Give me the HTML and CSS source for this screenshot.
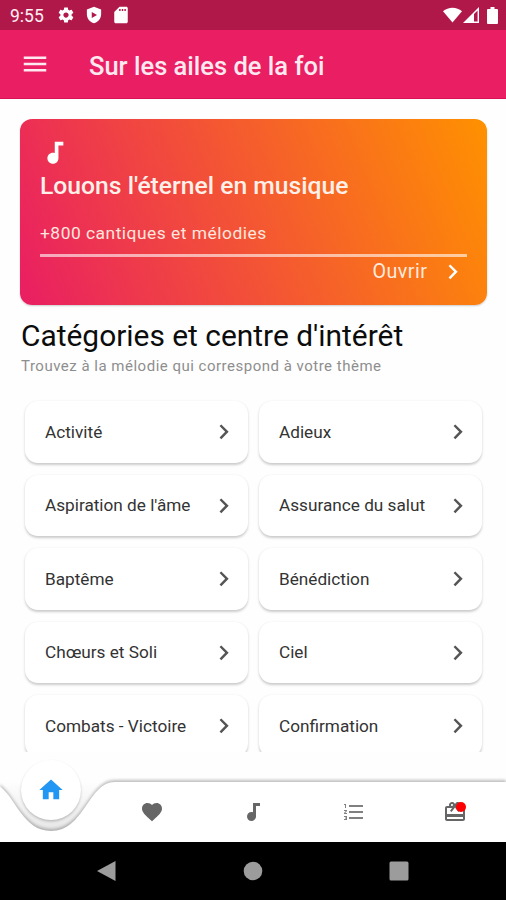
FILE: index.html
```html
<!DOCTYPE html>
<html lang="fr">
<head>
  <meta charset="UTF-8">
  <title>Sur les ailes de la foi</title>
  <meta name="viewport" content="width=device-width,initial-scale=1">
  <link rel="stylesheet" href="styles.css">
</head>
<body>
  <svg class="defs">
    <symbol id="chevron" viewBox="0 0 24 24"><path d="M10 6L8.59 7.41 13.17 12l-4.58 4.59L10 18l6-6z"/></symbol>
    <symbol id="note" viewBox="0 0 24 24"><path d="M12 3v9.28c-.47-.17-.97-.28-1.5-.28C8.01 12 6 14.01 6 16.5S8.01 21 10.5 21c2.31 0 4.2-1.75 4.45-4H15V6h4V3h-7z"/></symbol>
  </svg>
  <div class="screen">
    <div class="statusbar">
      <span class="clock">9:55</span>
      <svg class="st-icon" viewBox="0 0 24 24"><path d="M19.43 12.98c.04-.32.07-.64.07-.98s-.03-.66-.07-.98l2.11-1.65c.19-.15.24-.42.12-.64l-2-3.46c-.12-.22-.39-.3-.61-.22l-2.49 1c-.52-.4-1.08-.73-1.69-.98l-.38-2.65C14.46 2.18 14.25 2 14 2h-4c-.25 0-.46.18-.49.42l-.38 2.65c-.61.25-1.17.59-1.69.98l-2.49-1c-.23-.09-.49 0-.61.22l-2 3.46c-.13.22-.07.49.12.64l2.11 1.65c-.04.32-.07.65-.07.98s.03.66.07.98l-2.11 1.65c-.19.15-.24.42-.12.64l2 3.46c.12.22.39.3.61.22l2.49-1c.52.4 1.08.73 1.69.98l.38 2.65c.03.24.24.42.49.42h4c.25 0 .46-.18.49-.42l.38-2.65c.61-.25 1.17-.59 1.69-.98l2.49 1c.23.09.49 0 .61-.22l2-3.46c.12-.22.07-.49-.12-.64l-2.11-1.65zM12 15.5c-1.93 0-3.5-1.57-3.5-3.5s1.57-3.5 3.5-3.5 3.5 1.57 3.5 3.5-1.57 3.5-3.5 3.5z"/></svg>
      <svg class="st-icon" viewBox="0 0 24 24"><path fill-rule="evenodd" d="M12 1L2.500 4.500V11c0 5.600 4 10.700 9.500 12 5.500-1.300 9.500-6.400 9.500-12V4.500zM9 8l7 4-7 4z"/></svg>
      <svg class="st-icon" viewBox="0 0 24 24"><path d="M19 1h-9L3 8v13c0 1.100.9 2 2 2h14c1.100 0 2-.9 2-2V3c0-1.100-.9-2-2-2zM11.500 6.500h-2V4h2zm3.500 0h-2V4h2zm3.500 0h-2V4h2z"/></svg>
      <span class="spacer"></span>
      <svg class="wifi" viewBox="0 0 20 16"><path d="M10 16L0 4C5.500-1 14.500-1 20 4z"/></svg>
      <svg class="signal" viewBox="0 0 16 16"><path fill-rule="evenodd" d="M16 0v16H0zM14.600 3.500L11 7v7.600h3.600z"/></svg>
      <svg class="battery" viewBox="0 0 11 17"><path d="M3.500 0h4v2H10q1 0 1 1v13q0 1-1 1H1q-1 0-1-1V3q0-1 1-1h2.500z"/></svg>
    </div>

    <header class="appbar">
      <svg class="menu" viewBox="0 0 24 24"><path d="M3 18h18v-2H3v2zm0-5h18v-2H3v2zm0-7v2h18V6H3z"/></svg>
      <h1>Sur les ailes de la foi</h1>
    </header>

    <main>
      <section class="banner">
        <svg class="icon"><use href="#note"/></svg>
        <h2>Louons l'éternel en musique</h2>
        <p>+800 cantiques et mélodies</p>
        <div class="open">
          <span>Ouvrir</span>
          <svg class="icon"><use href="#chevron"/></svg>
        </div>
      </section>

      <h3>Catégories et centre d'intérêt</h3>
      <p class="hint">Trouvez à la mélodie qui correspond à votre thème</p>

      <div class="list">
        <div class="card"><span>Activité</span><svg class="icon"><use href="#chevron"/></svg></div>
        <div class="card"><span>Adieux</span><svg class="icon"><use href="#chevron"/></svg></div>
        <div class="card"><span>Aspiration de l'âme</span><svg class="icon"><use href="#chevron"/></svg></div>
        <div class="card"><span>Assurance du salut</span><svg class="icon"><use href="#chevron"/></svg></div>
        <div class="card"><span>Baptême</span><svg class="icon"><use href="#chevron"/></svg></div>
        <div class="card"><span>Bénédiction</span><svg class="icon"><use href="#chevron"/></svg></div>
        <div class="card"><span>Chœurs et Soli</span><svg class="icon"><use href="#chevron"/></svg></div>
        <div class="card"><span>Ciel</span><svg class="icon"><use href="#chevron"/></svg></div>
        <div class="card"><span>Combats - Victoire</span><svg class="icon"><use href="#chevron"/></svg></div>
        <div class="card"><span>Confirmation</span><svg class="icon"><use href="#chevron"/></svg></div>
      </div>
    </main>

    <nav class="tabs">
      <svg class="curve" viewBox="0 0 506 90"><path d="M-13 30C14 30 17 79 51 79S88 30 115 30H506V90H-13z"/></svg>
      <a class="tab active"><span class="bubble"><svg viewBox="0 0 24 24"><path d="M10 20v-6h4v6h5v-8h3L12 3 2 12h3v8z"/></svg></span></a>
      <a class="tab"><svg viewBox="0 0 24 24"><path d="M12 21.350l-1.450-1.320C5.400 15.360 2 12.280 2 8.500 2 5.420 4.420 3 7.500 3c1.740 0 3.410.81 4.500 2.090C13.090 3.810 14.760 3 16.500 3 19.580 3 22 5.420 22 8.500c0 3.780-3.400 6.860-8.550 11.540L12 21.350z"/></svg></a>
      <a class="tab"><svg><use href="#note"/></svg></a>
      <a class="tab"><svg class="thin" viewBox="0 0 24 24"><path d="M2 17h2v.5H3v1h1v.5H2v1h3v-4H2v1zm1-9h1V4H2v1h1v3zm-1 3h1.800L2 13.100v.9h3v-1H3.200L5 10.900V10H2v1zm5-6v2h14V5H7zm0 14h14v-2H7v2zm0-6h14v-2H7v2z"/></svg></a>
      <a class="tab"><svg class="gift" viewBox="0 0 24 24"><path fill-rule="evenodd" d="M20 6h-2.180c.11-.31.18-.65.18-1 0-1.660-1.340-3-3-3-1.050 0-1.960.54-2.500 1.350l-.5.670-.5-.680C10.960 2.540 10.050 2 9 2 7.340 2 6 3.340 6 5c0 .35.070.69.180 1H4c-1.110 0-1.990.89-1.990 2L2 19c0 1.110.89 2 2 2h16c1.110 0 2-.89 2-2V8c0-1.110-.89-2-2-2zM9 4c.55 0 1 .45 1 1s-.45 1-1 1-1-.45-1-1 .45-1 1-1zM20 19H4v-2h16v2zm0-5H4V8h5.080L7 10.830 8.620 12 12 7.400l3.380 4.600L17 10.830 14.920 8H20v6z"/></svg><i class="dot"></i></a>
    </nav>

    <footer class="sysnav">
      <svg viewBox="0 0 20 20"><path d="M18.500 0v20L0 10z"/></svg>
      <svg viewBox="0 0 20 20"><circle cx="10" cy="10" r="9.300"/></svg>
      <svg viewBox="0 0 20 20"><rect x=".5" y=".5" width="19" height="19" rx="1.500"/></svg>
    </footer>
  </div>
</body>
</html>
```
FILE: styles.css
```css
* { box-sizing: border-box; }
body { font-family: Roboto, sans-serif; background: #fefefe; margin: 0; }
h1, h2, h3, p { margin: 0; white-space: nowrap; }
svg { fill: currentColor; flex-shrink: 0; }
.defs { display: none; }
.icon { width: 29.5px; height: 29.5px; display: block; }
.screen { width: 506px; height: 900px; display: flex; flex-direction: column; overflow: hidden; }

.statusbar { height: 30px; background: #b0184a; color: #fff; display: flex; align-items: center; padding: 0 8px 0 10px; }
.clock { width: 47px; font-size: 17.5px; line-height: 30px; padding-top: 1px; color: #fff0f4; }
.st-icon { width: 18px; height: 18px; margin-right: 9.5px; }
.spacer { flex: 1; }
.wifi { width: 19px; height: 16px; }
.signal { width: 16px; height: 16px; margin: 0 8px 0 1px; }
.battery { width: 11px; height: 17px; }

.appbar { height: 69px; background: #e91e63; border-bottom: 1px solid #d81255; color: #ffe9f0; display: flex; align-items: center; padding-left: 20px; }
.menu { width: 30px; height: 30px; margin-right: 39px; }
h1 { font-size: 25.5px; font-weight: 500; line-height: 30px; padding-top: 3px; }

main { height: 653px; padding: 20px 19px 0 20px; display: flex; flex-direction: column; overflow: hidden; }
.banner { height: 186px; flex-shrink: 0; border-radius: 12px; padding: 19px 20px 0; color: #fff; background: linear-gradient(68deg, #e91e63, #ff9100); box-shadow: 0 1px 2px rgba(0,0,0,0.2); }
h2 { font-size: 24.7px; font-weight: 500; line-height: 30px; margin-top: 3px; color: #fff0ea; }
.banner p { font-size: 17.4px; line-height: 24px; letter-spacing: 0.5px; margin-top: 20px; color: #ffe6de; }
.open { display: flex; justify-content: flex-end; align-items: center; border-top: 3px solid rgba(255,255,255,0.6); margin-top: 9px; color: #ffeade; font-size: 19.7px; letter-spacing: 0.5px; }
.open .icon { margin-left: 10px; color: #fff; }

h3 { font-size: 29.9px; font-weight: 400; line-height: 34px; margin: 14px 0 0 1px; color: #0c0c0c; }
.hint { font-size: 15px; line-height: 20px; letter-spacing: 0.5px; margin: 3px 0 0 1px; color: #8e8e8e; }

.list { flex: 1; display: grid; grid-template-columns: 223px 223px; grid-auto-rows: 61.5px; gap: 12px 11px; padding: 5px 5px 0; margin-top: 20px; overflow: hidden; }
.card { display: flex; align-items: center; justify-content: space-between; padding: 0 10px 0 20px; background: #fff; border-radius: 13px; box-shadow: 0 1.5px 2.5px rgba(0,0,0,0.2); font-size: 17.2px; color: #333; white-space: nowrap; }
.card .icon { color: #555; }

.tabs { position: relative; height: 89px; flex-shrink: 0; display: flex; background: linear-gradient(#fefefe 34%, #e8e8e8 85%); color: #666; }
.curve { position: absolute; left: 0; top: 0; width: 506px; height: 90px; fill: #fff; filter: drop-shadow(0 -1.5px 1.5px rgba(0,0,0,0.25)); }
.tab { position: relative; width: 101px; display: flex; justify-content: center; padding-top: 47.5px; }
.tab svg { width: 24px; height: 24px; }
.tab .thin { color: #808080; }
.tab .gift { margin-left: 1px; }
.tab.active { padding-top: 8px; }
.bubble { width: 60px; height: 60px; border-radius: 50%; background: #fff; color: #2196f3; display: flex; align-items: center; justify-content: center; box-shadow: 0 1.5px 2.5px rgba(0,0,0,0.22); }
.bubble svg { width: 28px; height: 28px; }
.dot { position: absolute; left: 51.5px; top: 49.5px; width: 10px; height: 10px; border-radius: 50%; background: #f00; }

.sysnav { height: 59px; flex-shrink: 0; background: #000; border-top: 1px solid #777; color: #9c9c9c; display: flex; justify-content: space-between; align-items: center; padding: 0 97px; }
.sysnav svg { width: 20px; height: 20px; }
```
